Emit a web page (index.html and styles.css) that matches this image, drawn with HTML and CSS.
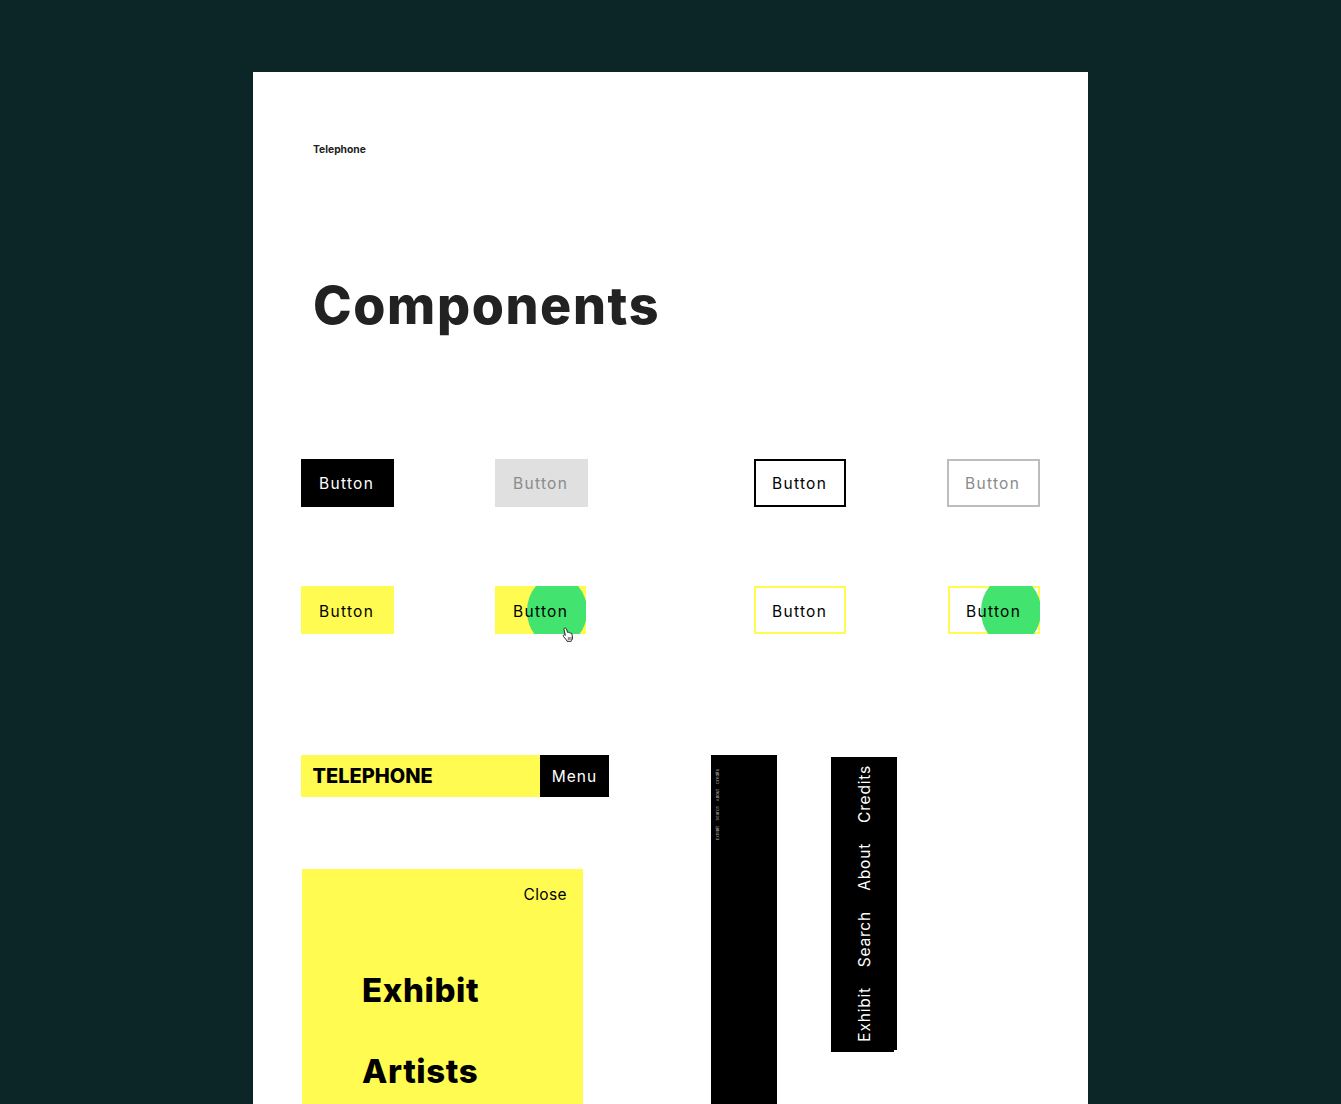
FILE: index.html
```html
<!DOCTYPE html>
<html lang="en">
<head>
<meta charset="utf-8">
<title>Components</title>
<link rel="stylesheet" href="styles.css">
</head>
<body>
<main class="card">
  <p class="brand">Telephone</p>
  <h1 class="title">Components</h1>
  <section class="buttons">
    <a class="btn btn-black">Button</a>
    <a class="btn btn-grey">Button</a>
    <a class="btn btn-outline">Button</a>
    <a class="btn btn-outline-grey">Button</a>
    <a class="btn btn-yellow">Button</a>
    <a class="btn btn-yellow hover"><i class="blob"></i><span class="label">Button</span></a>
    <a class="btn btn-outline-yellow">Button</a>
    <a class="btn btn-outline-yellow hover shift"><i class="blob"></i><span class="label">Button</span></a>
    <svg class="cursor" viewBox="0 0 12 16" width="12" height="16" aria-hidden="true"><path d="M2.5 1.2c.8-.4 1.6 0 1.900.8l1.200 3.400c.6-.3 1.200-.2 1.500.3.500-.2 1.100-.1 1.400.4.600-.2 1.200.2 1.400.8l.6 3.300c.2 1.300-.2 2.400-1 3.300l-.3.800H5l-.5-1.200-3-3.600c-.5-.7-.2-1.400.4-1.600.5-.2 1 0 1.500.4L2 2.800c-.2-.7 0-1.300.5-1.600z" fill="#fff" stroke="#111" stroke-width=".9" stroke-linejoin="round"/><path d="M6.300 10v3M7.800 10v3M9.200 10v3" stroke="#111" stroke-width=".6"/></svg>
  </section>
  <section class="lower">
    <div class="mobile">
      <header class="topbar">
        <strong class="logo">TELEPHONE</strong>
        <span class="menu-btn">Menu</span>
      </header>
      <nav class="panel">
        <span class="close">Close</span>
        <a class="panel-link">Exhibit</a>
        <a class="panel-link">Artists</a>
      </nav>
    </div>
    <nav class="rail rail-long">
      <a>Exhibit</a><a>Search</a><a>About</a><a>Credits</a>
    </nav>
    <nav class="rail rail-short">
      <a>Exhibit</a><a>Search</a><a>About</a><a>Credits</a>
    </nav>
  </section>
</main>
</body>
</html>
```
FILE: styles.css
```css
* { box-sizing: border-box; }
html, body { margin: 0; height: 1104px; overflow: hidden; }
body { background: #0c2526; font-family: "Inter", "Liberation Sans", sans-serif; color: #000; }
.card { width: 835px; height: 1032px; margin: 72px 0 0 253px; background: #fff; padding: 0 48px; overflow: hidden; }
.brand { margin: 71px 0 0 12px; font-size: 10.300px; line-height: 13px; font-weight: 700; color: #222; }
.title { margin: 120px 0 0 12px; font-size: 52px; line-height: 60px; font-weight: 800; color: #222; letter-spacing: 1.600px; }
.buttons { position: relative; display: grid; grid-template-columns: 194px 259px 193px 93px; grid-auto-rows: 48px; row-gap: 79px; margin-top: 123px; }
.btn { position: relative; display: flex; align-items: center; width: 93px; height: 48px; padding-left: 18px; font-size: 15.500px; letter-spacing: 1.300px; overflow: hidden; }
.btn-black { background: #000; color: #fff; }
.btn-grey { background: #e0e0e0; color: #8a8a8a; }
.btn-outline { width: 92px; box-shadow: inset 0 0 0 2px #000; }
.btn-outline-grey { box-shadow: inset 0 0 0 2px #bdbdbd; color: #8a8a8a; }
.btn-yellow { background: #fffb50; padding-top: 2px; }
.btn-yellow.hover { width: 91px; }
.btn-outline-yellow { width: 92px; padding-top: 2px; box-shadow: inset 0 0 0 2px #fffb50; }
.shift { width: 92px; margin-left: 1px; }
.blob { position: absolute; left: 32px; top: -10px; width: 60px; height: 70px; border-radius: 50%; background: #42e36f; }
.shift .blob { left: 33px; }
.label { position: relative; }
.cursor { position: absolute; left: 261px; top: 168px; }
.lower { display: flex; margin-top: 121px; align-items: flex-start; }
.mobile { width: 410px; }
.topbar { display: flex; width: 308px; height: 42px; }
.logo { flex: 1; display: flex; align-items: center; padding-left: 11.500px; background: #fffb50; font-size: 20px; font-weight: 800; }
.menu-btn { display: flex; align-items: center; justify-content: center; width: 69px; background: #000; color: #fff; font-size: 15.500px; letter-spacing: 1px; }
.panel { display: flex; flex-direction: column; width: 281px; height: 260px; margin: 72px 0 0 1px; padding: 16px 16px 0 60px; background: #fffb50; }
.close { align-self: flex-end; font-size: 15.500px; line-height: 20px; letter-spacing: .4px; }
.panel-link { font-size: 33px; line-height: 40px; font-weight: 800; margin-top: 41px; letter-spacing: .6px; }
.panel-link:first-of-type { margin-top: 65px; }
.rail { display: flex; flex-direction: column-reverse; align-items: center; width: 66px; background: #000; color: #fff; }
.rail a { writing-mode: vertical-rl; transform: rotate(180deg); }
.rail-long { height: 349px; padding: 14px 0 0 4px; gap: 5px; justify-content: flex-end; align-items: flex-start; color: #b5b5b5; }
.rail-long a { font-size: 4px; line-height: 5px; letter-spacing: .2px; }
.rail-short { height: 295px; margin: 2px 0 0 54px; padding: 8px 0 10px 1px; justify-content: space-between; clip-path: polygon(0 0, 100% 0, 100% 293px, 63px 293px, 63px 100%, 0 100%); }
.rail-short a { font-size: 15.500px; line-height: 18px; letter-spacing: .8px; }
```
